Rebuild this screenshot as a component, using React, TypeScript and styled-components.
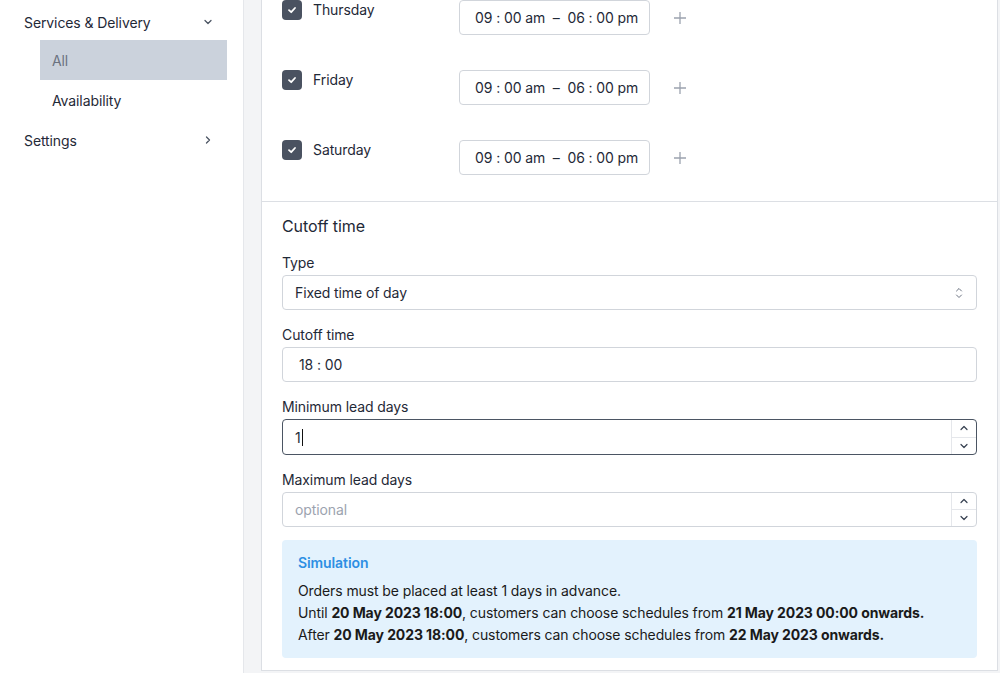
import React from "react";
import styled, { createGlobalStyle } from "styled-components";

const GlobalStyle = createGlobalStyle`
  html, body {
    margin: 0;
    padding: 0;
    background: #f3f4f6;
    font-family: Inter, "Liberation Sans", sans-serif;
    color: #1f2937;
    font-size: 14px;
    letter-spacing: -0.1px;
    overflow: hidden;
  }
  * { box-sizing: border-box; }
`;

const Layout = styled.div`
  display: flex;
  height: 673px;
  width: 1000px;
`;

const Sidebar = styled.nav`
  width: 244px;
  flex-shrink: 0;
  background: #fff;
  border-right: 1px solid #e5e7eb;
  padding: 4px 16px 0 0;
`;

const NavItem = styled.div<{ $gap?: number }>`
  display: flex;
  align-items: center;
  justify-content: space-between;
  height: 36px;
  padding: 0 13px 0 24px;
  margin-top: ${(p) => p.$gap ?? 0}px;
  font-size: 14px;
  color: #1f2937;
`;

const SubItem = styled.div<{ $active?: boolean }>`
  display: flex;
  align-items: center;
  height: 40px;
  margin-left: 40px;
  padding-left: 12px;
  font-size: 14px;
  color: ${(p) => (p.$active ? "#6b7280" : "#1f2937")};
  background: ${(p) => (p.$active ? "#cbd2dc" : "transparent")};
`;

const Main = styled.main`
  flex: 1;
  padding: 0 2px 0 17px;
`;

const Card = styled.section`
  background: #fff;
  border: 1px solid #dcdfe4;
  border-top: none;
`;

const DaysBlock = styled.div`
  display: flex;
  flex-direction: column;
  gap: 35px;
  padding: 0 20px 26px;
  border-bottom: 1px solid #dcdfe4;
`;

const DayRow = styled.div`
  display: flex;
  align-items: flex-start;
  height: 35px;
`;

const DayLeft = styled.div`
  display: flex;
  align-items: flex-start;
  gap: 11px;
  width: 177px;
`;

const Check = styled.span`
  width: 20px;
  height: 20px;
  border-radius: 4px;
  background: #4a5261;
  display: flex;
  align-items: center;
  justify-content: center;
`;

const DayName = styled.span`
  font-size: 14px;
  line-height: 20px;
  color: #1f2937;
`;

const TimeBox = styled.div`
  width: 191px;
  height: 35px;
  border: 1px solid #d1d5db;
  border-radius: 4px;
  display: flex;
  align-items: center;
  padding: 0 15px;
  font-size: 14px;
  color: #1f2937;
  white-space: pre;
`;

const PlusBtn = styled.span`
  margin-left: 23px;
  height: 35px;
  display: flex;
  align-items: center;
`;

const Section = styled.div`
  padding: 12px 20px 12px;
`;

const SectionTitle = styled.h3`
  margin: 0 0 15px;
  font-size: 16px;
  font-weight: 400;
  line-height: 24px;
  color: #1f2937;
`;

const Field = styled.div`
  display: flex;
  flex-direction: column;
  gap: 2px;
  margin-bottom: 15px;
`;

const Label = styled.label`
  font-size: 14px;
  line-height: 20px;
  color: #1f2937;
`;

const Control = styled.div<{ $focus?: boolean }>`
  height: ${(p) => (p.$focus ? 36 : 35)}px;
  border: 1px solid ${(p) => (p.$focus ? "#4b5563" : "#d1d5db")};
  border-radius: 4px;
  display: flex;
  align-items: center;
  font-size: 14px;
  color: #1f2937;
  overflow: hidden;
`;

const ControlText = styled.span<{ $muted?: boolean; $pad?: number }>`
  flex: 1;
  padding-left: ${(p) => p.$pad ?? 12}px;
  color: ${(p) => (p.$muted ? "#9ca3af" : "#1f2937")};
  white-space: pre;
  display: flex;
  align-items: center;
`;

const Caret = styled.span`
  display: inline-block;
  width: 1px;
  height: 17px;
  background: #111;
  margin-left: 1px;
`;

const SelectIcon = styled.span`
  width: 34px;
  display: flex;
  justify-content: center;
`;

const Stepper = styled.div`
  width: 25px;
  align-self: stretch;
  border-left: 1px solid #e5e7eb;
  display: flex;
  flex-direction: column;
`;

const StepHalf = styled.span<{ $top?: boolean }>`
  flex: 1;
  display: flex;
  align-items: center;
  justify-content: center;
  border-bottom: ${(p) => (p.$top ? "1px solid #e5e7eb" : "none")};
`;

const SimBox = styled.div`
  margin-top: -2px;
  background: #e3f2fd;
  border-radius: 4px;
  padding: 12px 16px;
`;

const SimTitle = styled.div`
  font-size: 14px;
  font-weight: 600;
  line-height: 22px;
  color: #2d8fe3;
  margin-bottom: 6px;
`;

const SimLine = styled.div`
  font-size: 14px;
  line-height: 22px;
  color: #1a1a1a;
  b { font-weight: 700; }
`;

const ChevronDown = () => (
  <svg width="12" height="12" viewBox="0 0 12 12" fill="none" stroke="#4b5563" strokeWidth="1.3" strokeLinecap="round" strokeLinejoin="round">
    <path d="M3 4.5 L6 7.5 L9 4.5" />
  </svg>
);

const ChevronRight = () => (
  <svg width="12" height="12" viewBox="0 0 12 12" fill="none" stroke="#4b5563" strokeWidth="1.3" strokeLinecap="round" strokeLinejoin="round">
    <path d="M4.5 3 L7.5 6 L4.5 9" />
  </svg>
);

const CheckMark = () => (
  <svg width="12" height="12" viewBox="0 0 12 12" fill="none" stroke="#fff" strokeWidth="1.8" strokeLinecap="round" strokeLinejoin="round">
    <path d="M3 6.2 L5.2 8.2 L9 4" />
  </svg>
);

const Plus = () => (
  <svg width="14" height="14" viewBox="0 0 14 14" fill="none" stroke="#9ca3af" strokeWidth="1.3">
    <path d="M7 1 V13 M1 7 H13" />
  </svg>
);

const UpDown = () => (
  <svg width="10" height="14" viewBox="0 0 10 14" fill="none" stroke="#6b7280" strokeWidth="1" strokeLinecap="round" strokeLinejoin="round">
    <path d="M2.5 5 L5 2.5 L7.5 5 M2.5 9 L5 11.5 L7.5 9" />
  </svg>
);

const Arrow = ({ up }: { up?: boolean }) => (
  <svg width="10" height="8" viewBox="0 0 10 8" fill="none" stroke="#374151" strokeWidth="1.2" strokeLinecap="round" strokeLinejoin="round">
    <path d={up ? "M2 5.5 L5 2.5 L8 5.5" : "M2 2.5 L5 5.5 L8 2.5"} />
  </svg>
);

const NumberStepper = () => (
  <Stepper>
    <StepHalf $top>
      <Arrow up />
    </StepHalf>
    <StepHalf>
      <Arrow />
    </StepHalf>
  </Stepper>
);

const days = ["Thursday", "Friday", "Saturday"];

export default function App() {
  return (
    <>
      <GlobalStyle />
      <Layout>
        <Sidebar>
          <NavItem>
            <span>Services &amp; Delivery</span>
            <ChevronDown />
          </NavItem>
          <SubItem $active>All</SubItem>
          <SubItem>Availability</SubItem>
          <NavItem $gap={2}>
            <span>Settings</span>
            <ChevronRight />
          </NavItem>
        </Sidebar>
        <Main>
          <Card>
            <DaysBlock>
              {days.map((d) => (
                <DayRow key={d}>
                  <DayLeft>
                    <Check>
                      <CheckMark />
                    </Check>
                    <DayName>{d}</DayName>
                  </DayLeft>
                  <TimeBox>{"09 : 00 am  –  06 : 00 pm"}</TimeBox>
                  <PlusBtn>
                    <Plus />
                  </PlusBtn>
                </DayRow>
              ))}
            </DaysBlock>
            <Section>
              <SectionTitle>Cutoff time</SectionTitle>
              <Field>
                <Label>Type</Label>
                <Control>
                  <ControlText>Fixed time of day</ControlText>
                  <SelectIcon>
                    <UpDown />
                  </SelectIcon>
                </Control>
              </Field>
              <Field>
                <Label>Cutoff time</Label>
                <Control>
                  <ControlText $pad={16}>{"18 : 00"}</ControlText>
                </Control>
              </Field>
              <Field>
                <Label>Minimum lead days</Label>
                <Control $focus>
                  <ControlText>
                    1<Caret />
                  </ControlText>
                  <NumberStepper />
                </Control>
              </Field>
              <Field>
                <Label>Maximum lead days</Label>
                <Control>
                  <ControlText $muted>optional</ControlText>
                  <NumberStepper />
                </Control>
              </Field>
              <SimBox>
                <SimTitle>Simulation</SimTitle>
                <SimLine>Orders must be placed at least 1 days in advance.</SimLine>
                <SimLine>
                  Until <b>20 May 2023 18:00</b>, customers can choose schedules from{" "}
                  <b>21 May 2023 00:00 onwards.</b>
                </SimLine>
                <SimLine>
                  After <b>20 May 2023 18:00</b>, customers can choose schedules from{" "}
                  <b>22 May 2023 onwards.</b>
                </SimLine>
              </SimBox>
            </Section>
          </Card>
        </Main>
      </Layout>
    </>
  );
}
